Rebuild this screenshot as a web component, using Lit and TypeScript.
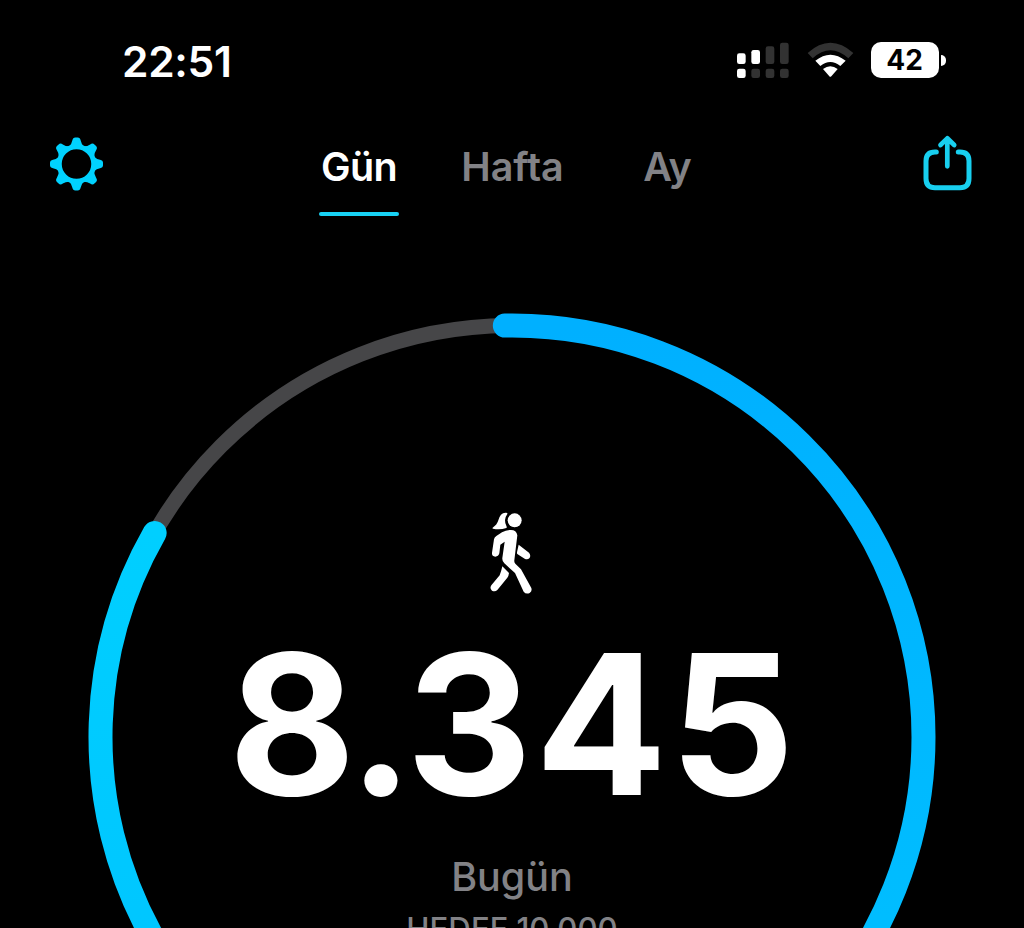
import { css, html, LitElement, svg } from "lit";
import { customElement, property } from "lit/decorators.js";

@customElement("x-status-bar")
export class StatusBar extends LitElement {
  @property({ type: String })
  time = "";

  @property({ type: Number })
  battery = 0;

  static styles = css`
    :host {
      display: flex;
      align-items: center;
      height: 60px;
      padding: 30px 78px 0 122px;
    }

    .time {
      flex: 1;
      font-size: 42.5px;
      font-weight: 600;
      line-height: 60px;
      letter-spacing: -0.3px;
      padding-top: 3px;
    }

    .signal {
      width: 54px;
      height: 60px;
      margin-right: 17px;
    }

    .wifi {
      width: 48px;
      height: 60px;
      margin-right: 16px;
    }

    .battery {
      box-sizing: border-box;
      width: 68px;
      height: 36px;
      padding-right: 1px;
      border-radius: 10px;
      background: #fff;
      color: #000;
      font-size: 28px;
      font-weight: 700;
      line-height: 37px;
      text-align: center;
    }

    .nub {
      width: 5px;
      height: 11px;
      margin-left: 2px;
      border-radius: 0 5px 5px 0;
      background: #fff;
    }
  `;

  render() {
    const tops = [70, 60, 49, 38];
    return html`
      <span class="time">${this.time}</span>
      <svg class="signal" viewBox="50 0 162 180">
        ${tops.map(
          (top, i) => svg`
            <rect x=${53 + i * 43} y=${top} width="26" height=${102 - top} rx="7" fill=${i < 2 ? "#fff" : "#323232"} />
            <rect x=${53 + i * 43} y="116" width="26" height="28" rx="7" fill=${i < 1 ? "#fff" : "#323232"} />
          `
        )}
      </svg>
      <svg class="wifi" viewBox="262 0 144 180">
        <path d="M264 69 Q332 8 401 69 L386 85 Q332 37 279 85 Z" fill="#323232" />
        <path d="M287 92 Q332 56 378 92 L362 108 Q332 84 302 108 Z" fill="#fff" />
        <path d="M310 117 Q332 101 354 117 L335 139 Q332 142 329 139 Z" fill="#fff" />
      </svg>
      <span class="battery">${this.battery}</span>
      <span class="nub"></span>
    `;
  }
}

@customElement("x-nav-bar")
export class NavBar extends LitElement {
  @property({ type: String })
  selected = "";

  static styles = css`
    :host {
      display: grid;
      grid-template-columns: 269px 1fr 269px;
      height: 130px;
      padding: 30px 50px 0;
      color: #828286;
    }

    .icon {
      width: 54px;
      height: 56px;
      margin-top: 15px;
    }

    .share {
      justify-self: end;
    }

    .tabs {
      display: flex;
      align-items: flex-start;
    }

    .tab {
      box-sizing: border-box;
      height: 96px;
      padding-top: 17px;
      font-size: 39.5px;
      font-weight: 600;
      line-height: 60px;
      letter-spacing: -0.1px;
      text-align: center;
      white-space: nowrap;
    }

    .day {
      width: 80px;
      margin-right: 62px;
    }

    .week {
      width: 103px;
      margin-right: 79px;
    }

    .month {
      width: 48px;
      letter-spacing: -0.8px;
    }

    .selected {
      color: #fff;
      letter-spacing: -0.6px;
    }

    .selected::after {
      content: "";
      display: block;
      height: 4px;
      margin-top: 14.5px;
      border-radius: 2px;
      background: #18d2f5;
    }
  `;

  renderTab(name: string, label: string) {
    return html`
      <span class="tab ${name} ${this.selected === name ? "selected" : ""}"
        >${label}</span
      >
    `;
  }

  render() {
    return html`
      <svg class="icon" viewBox="-26.5 -29 54 56" fill="#00d2ff">
        <circle r="17.2" fill="none" stroke="#00d2ff" stroke-width="4.9" />
        ${[0, 45, 90, 135, 180, 225, 270, 315].map(
          (angle) => svg`
            <path transform="rotate(${angle})" d="M-7.5 -17.5 Q-4.8 -20 -4.2 -23.5 Q-3.6 -26.5 -1.2 -26.5 H1.2 Q3.6 -26.5 4.2 -23.5 Q4.8 -20 7.5 -17.5 Z" />
          `
        )}
      </svg>
      <div class="tabs">
        ${this.renderTab("day", "Gün")} ${this.renderTab("week", "Hafta")}
        ${this.renderTab("month", "Ay")}
      </div>
      <svg
        class="icon share"
        viewBox="920 135 54 56"
        fill="none"
        stroke="#18cfef"
        stroke-width="5"
        stroke-linecap="round"
        stroke-linejoin="round"
      >
        <path d="M936.3 152 H935 Q926 152 926 161 V178.5 Q926 187.7 935 187.7 H960 Q969 187.7 969 178.5 V161 Q969 152 960 152 H958.3" />
        <path d="M947.3 166.3 V139.5 M940.5 145 L947.3 138.3 L954.2 145" stroke-width="4.7" />
      </svg>
    `;
  }
}

@customElement("x-step-ring")
export class StepRing extends LitElement {
  @property({ type: Number })
  steps = 0;

  @property({ type: Number })
  goal = 0;

  static styles = css`
    :host {
      display: grid;
      justify-content: center;
      grid-template-columns: 848px;
    }

    .ring,
    .content {
      grid-area: 1 / 1;
    }

    .ring {
      width: 848px;
      height: 848px;
    }

    .content {
      display: flex;
      flex-direction: column;
      align-items: center;
      padding-top: 187px;
      color: #828286;
      white-space: nowrap;
    }

    .walker {
      width: 80px;
      height: 110px;
      margin-right: 4px;
    }

    .steps {
      color: #fff;
      font-size: 195.5px;
      font-weight: 700;
      line-height: 240px;
      letter-spacing: 2.7px;
      margin: -6px 0 0 2px;
    }

    .separator {
      margin: 0 -10.2px;
    }

    .label {
      font-size: 39.5px;
      font-weight: 500;
      line-height: 60px;
      margin-top: 3px;
    }

    .goal {
      font-size: 31.2px;
      font-weight: 500;
      line-height: 40px;
      margin-top: 1.5px;
    }
  `;

  // Point on the ring, in degrees clockwise from the top.
  point(angle: number) {
    const rad = (angle * Math.PI) / 180;
    return `${(411.5 * Math.sin(rad)).toFixed(2)} ${(
      -411.5 * Math.cos(rad)
    ).toFixed(2)}`;
  }

  render() {
    const end = (this.steps / this.goal) * 360 - 0.7;
    const [thousands, rest] = this.steps.toLocaleString("de-DE").split(".");
    return html`
      <svg class="ring" viewBox="-424 -424 848 848" fill="none">
        <defs>
          <linearGradient id="right" gradientUnits="userSpaceOnUse" x1="0" y1="-411" x2="0" y2="411">
            <stop offset="0" stop-color="#00b0ff" />
            <stop offset="1" stop-color="#00c2ff" />
          </linearGradient>
          <linearGradient id="left" gradientUnits="userSpaceOnUse" x1="0" y1="411" x2="0" y2="-205">
            <stop offset="0" stop-color="#00c2ff" />
            <stop offset="1" stop-color="#00cfff" />
          </linearGradient>
        </defs>
        <circle r="411.5" stroke="#464648" stroke-width="15" />
        <g stroke-width="24" stroke-linecap="round">
          <path stroke="url(#left)" d="M0 411.5 A411.5 411.5 0 0 1 ${this.point(end)}" />
          <path stroke="url(#right)" d="M${this.point(-1)} A411.5 411.5 0 0 1 411.5 0 A411.5 411.5 0 0 1 0 411.5" />
        </g>
      </svg>
      <div class="content">
        <svg class="walker" viewBox="0 0 240 330" fill="#fff">
          <circle cx="134" cy="61" r="21" />
          <path d="M109 38 Q99 37 93 44 Q87 51 85 61 Q81 75 68 83 Q66 85 69 86 Q90 90 109 84 Q112 82 109 77 Q100 59 112 42 Q114 39 109 38 Z" />
          <path d="M119 90 Q139 88 142 106 L133 181 Q132 187 136 191 L153 208 L184 264 Q187 274 179 279 Q168 284 161 275 L135 219 L103 190 Q96 184 97 174 L104 125 L91 134 L88 160 Q85 170 76 170 Q65 169 66 158 L72 118 Q73 112 79 108 L96 97 Q107 91 119 90 Z" />
          <path d="M146 134 L177 158 Q184 167 178 175 Q172 180 164 176 L143 163 Q140 161 141 157 Z" />
          <path d="M97 199 L117 219 Q116 228 112 233 L82 270 Q75 277 66 272 Q58 265 64 256 L89 226 Q94 213 97 199 Z" />
        </svg>
        <span class="steps"
          >${thousands}<span class="separator">.</span>${rest}</span
        >
        <span class="label">Bugün</span>
        <span class="goal">HEDEF ${this.goal.toLocaleString("de-DE")}</span>
      </div>
    `;
  }
}

@customElement("app-root")
export class AppRoot extends LitElement {
  static styles = css`
    :host {
      display: block;
      height: 928px;
      overflow: hidden;
      background: #000;
      color: #fff;
      font-family: Inter, "Liberation Sans", sans-serif;
    }

    .ring {
      margin-top: 63px;
    }
  `;

  render() {
    return html`
      <x-status-bar time="22:51" battery="42"></x-status-bar>
      <x-nav-bar selected="day"></x-nav-bar>
      <x-step-ring class="ring" steps="8345" goal="10000"></x-step-ring>
    `;
  }
}
